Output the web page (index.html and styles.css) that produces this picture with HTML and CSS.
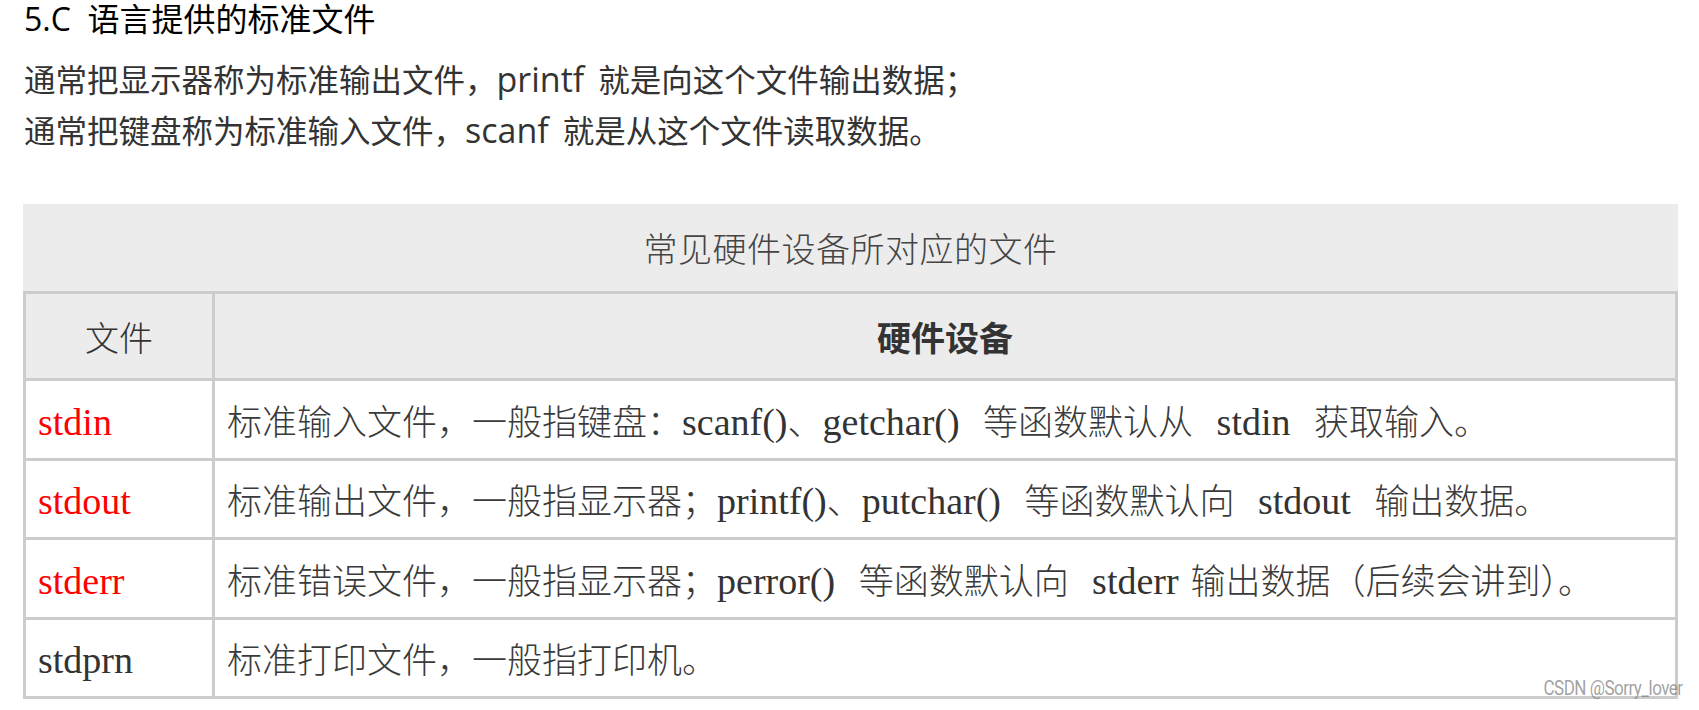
FILE: index.html
```html
<!DOCTYPE html>
<html lang="zh-CN">
<head>
<meta charset="utf-8">
<title>5.C 语言提供的标准文件</title>
<link rel="stylesheet" href="styles.css">
</head>
<body>
<div class="page">
  <h2 class="title">5.C&nbsp; 语言提供的标准文件</h2>
  <p class="line">通常把显示器称为标准输出文件，<span class="lat">printf</span>&nbsp; 就是向这个文件输出数据；</p>
  <p class="line">通常把键盘称为标准输入文件，<span class="lat">scanf</span>&nbsp; 就是从这个文件读取数据。</p>

  <table class="dev-table">
    <caption class="cap">常见硬件设备所对应的文件</caption>
    <colgroup>
      <col class="c1">
      <col class="c2">
    </colgroup>
    <thead>
      <tr>
        <th class="h-file">文件</th>
        <th class="h-dev">硬件设备</th>
      </tr>
    </thead>
    <tbody>
      <tr>
        <td class="red"><span class="en">stdin</span></td>
        <td>标准输入文件，一般指键盘：<span class="en">scanf()</span>、<span class="en">getchar()</span>&nbsp; 等函数默认从&nbsp; <span class="en">stdin</span>&nbsp; 获取输入。</td>
      </tr>
      <tr>
        <td class="red"><span class="en">stdout</span></td>
        <td>标准输出文件，一般指显示器；<span class="en">printf()</span>、<span class="en">putchar()</span>&nbsp; 等函数默认向&nbsp; <span class="en">stdout</span>&nbsp; 输出数据。</td>
      </tr>
      <tr>
        <td class="red"><span class="en">stderr</span></td>
        <td>标准错误文件，一般指显示器；<span class="en">perror()</span>&nbsp; 等函数默认向&nbsp; <span class="en">stderr</span> 输出数据（后续会讲到）。</td>
      </tr>
      <tr>
        <td><span class="en">stdprn</span></td>
        <td>标准打印文件，一般指打印机。</td>
      </tr>
    </tbody>
  </table>
  <div class="mark">CSDN @Sorry_lover</div>
</div>
</body>
</html>
```
FILE: styles.css
```css
html, body {
  margin: 0;
  padding: 0;
  background: #fff;
}

.page {
  position: relative;
  width: 1699px;
  height: 710px;
  overflow: hidden;
}

.title {
  margin: 0;
  padding-left: 24px;
  font-family: "Open Sans", "Noto Sans CJK SC", sans-serif;
  font-weight: 400;
  font-size: 32px;
  line-height: 38px;
  color: #000;
}

.line {
  margin: 0;
  padding-left: 24px;
  font-family: "Noto Sans CJK SC", sans-serif;
  font-size: 31.5px;
  line-height: 50px;
  color: #333;
}

.lat {
  font-family: "Open Sans", sans-serif;
  font-size: 34px;
}

.title + .line {
  margin-top: 15px;
}

.dev-table {
  margin-top: 49px;
  margin-left: 23px;
  width: 1655px;
  border-collapse: collapse;
  table-layout: fixed;
  font-family: "Liberation Serif", "Noto Sans CJK SC", serif;
  color: #444;
}

.cap {
  background: #ececec;
  height: 87px;
  line-height: 87px;
  font-family: "Noto Sans CJK SC", sans-serif;
  font-weight: 300;
  font-size: 34px;
  letter-spacing: 0.5px;
  color: #444;
  text-align: center;
}

.c1 { width: 189px; }

.dev-table th,
.dev-table td {
  border: 3px solid #cccccc;
  padding: 0 12px;
  vertical-align: middle;
}

.dev-table th {
  background: #ececec;
  height: 84px;
  font-size: 34px;
  color: #333;
  text-align: center;
}

.h-file {
  font-family: "Noto Sans CJK SC", sans-serif;
  font-weight: 300;
}

.h-dev {
  font-family: "Noto Sans CJK SC", sans-serif;
  font-weight: 700;
}

.dev-table td {
  height: 76.5px;
  font-family: "Noto Sans CJK SC", sans-serif;
  font-weight: 300;
  font-size: 35px;
  word-spacing: 4px;
  color: #3a3a3a;
  white-space: nowrap;
}

.en {
  font-family: "Liberation Serif", serif;
  font-weight: 400;
  font-size: 38px;
  color: #333;
}

.red .en {
  color: #ff0000;
}

.mark {
  position: absolute;
  right: 16px;
  bottom: 10px;
  font-family: Roboto, "Liberation Sans", sans-serif;
  font-size: 20px;
  letter-spacing: -0.6px;
  color: rgba(120, 120, 120, 0.7);
  transform: scaleX(0.85);
  transform-origin: right bottom;
}
```
